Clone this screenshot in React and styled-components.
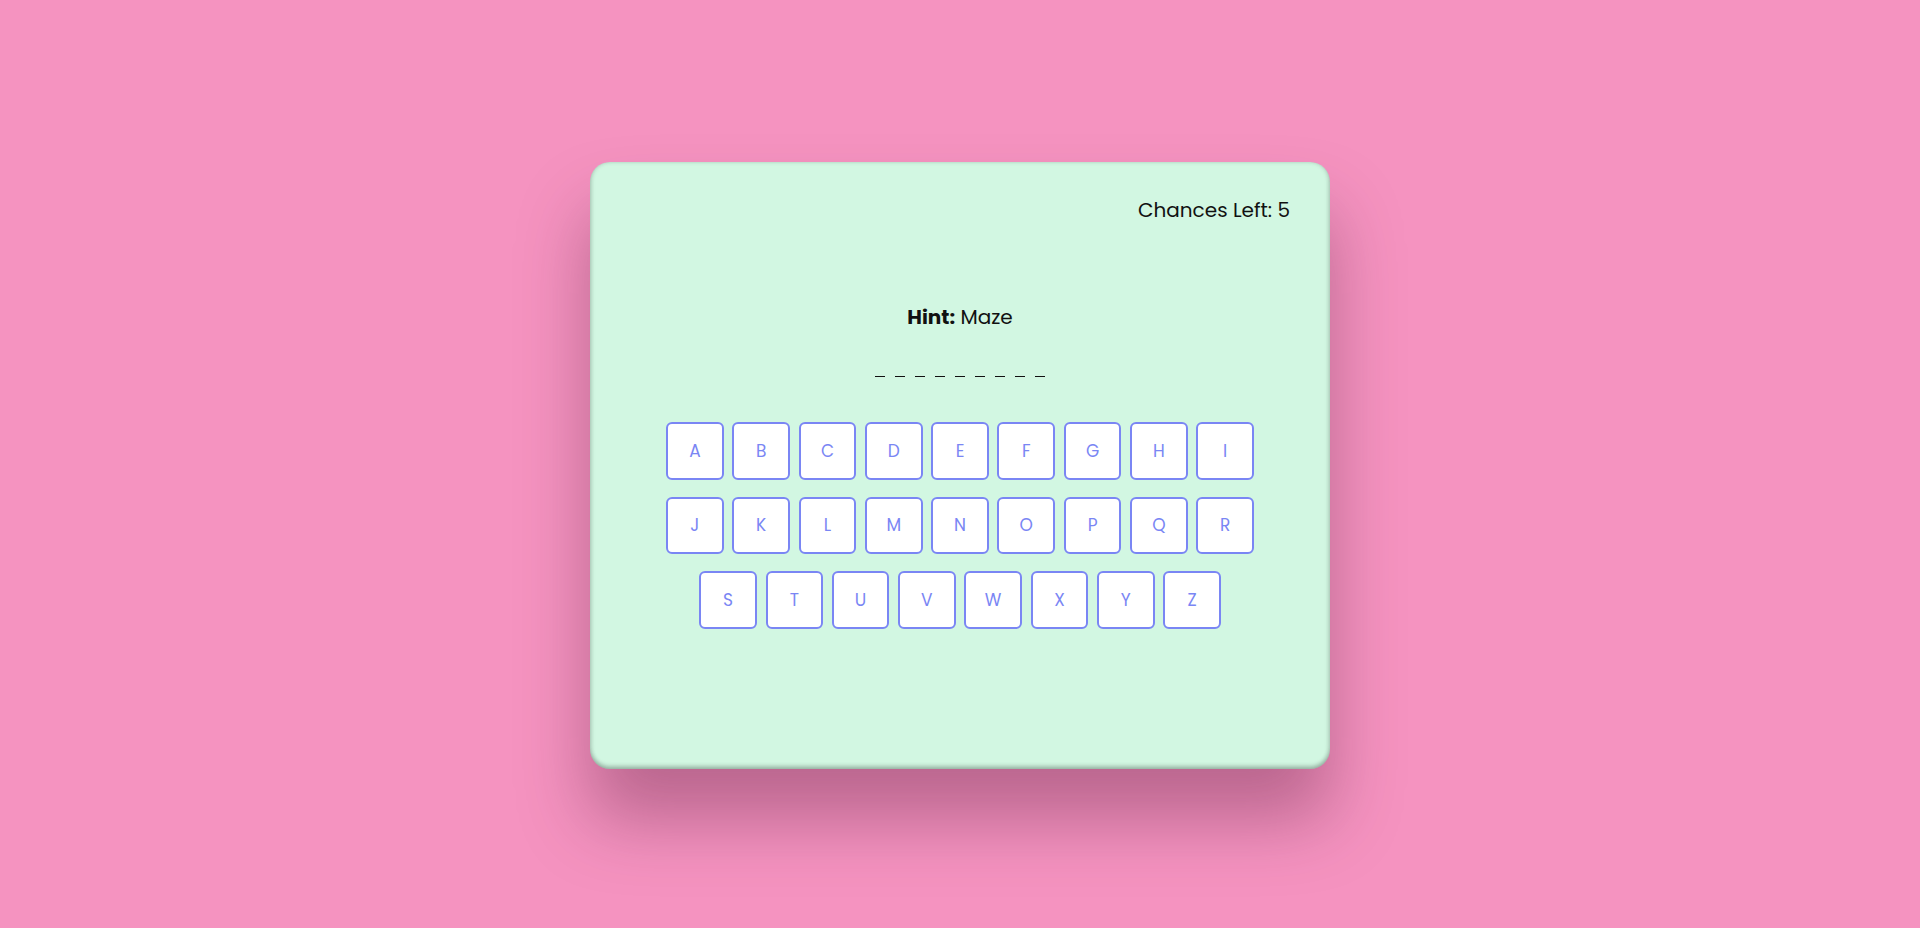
import React from 'react';
import styled, { createGlobalStyle } from 'styled-components';

const GlobalStyle = createGlobalStyle`
  html, body {
    margin: 0;
    padding: 0;
    height: 100%;
  }
  body {
    background: #f593c0;
    font-family: Poppins, Inter, "Noto Sans", sans-serif;
  }
`

const Page = styled.div`
  display: flex;
  justify-content: center;
  align-items: center;
  height: 928px;
`

const Card = styled.div`
  box-sizing: border-box;
  width: 740px;
  height: 607px;
  margin-top: 3px;
  padding: 36px 40px 0;
  background: #d2f7e2;
  border-radius: 20px;
  display: flex;
  flex-direction: column;
  align-items: center;
  box-shadow:
    0 50px 70px rgba(90, 30, 60, 0.38),
    inset 0 -3px 4px rgba(0, 0, 0, 0.22),
    inset 2px 0 4px rgba(0, 0, 0, 0.08),
    inset -2px 0 4px rgba(0, 0, 0, 0.08);
`

const Chances = styled.div`
  align-self: flex-end;
  font-size: 20px;
  line-height: 24px;
  color: #111;
`

const Hint = styled.p`
  margin: 83px 0 0;
  font-size: 20px;
  line-height: 24px;
  color: #111;

  b {
    font-weight: 700;
  }
`

const Word = styled.div`
  display: flex;
  gap: 10px;
  margin-top: 24px;
  height: 24px;
  align-items: flex-end;
  padding-bottom: 4px;
`

const Dash = styled.span`
  display: block;
  width: 10px;
  height: 1.5px;
  background: #111;
`

const Keyboard = styled.div`
  display: flex;
  flex-wrap: wrap;
  justify-content: center;
  gap: 17px 8.7px;
  width: 600px;
  margin-top: 41px;
`

const Key = styled.button`
  box-sizing: border-box;
  width: 57.6px;
  height: 57.6px;
  background: #fff;
  border: 2px solid #7a86f4;
  border-radius: 6px;
  color: #7a86f4;
  font-family: inherit;
  font-size: 17px;
  font-weight: 400;
  padding: 0;
  cursor: pointer;
`

const letters = 'ABCDEFGHIJKLMNOPQRSTUVWXYZ'.split('');

const App = () => {
    return (
        <Page>
            <GlobalStyle />
            <Card>
                <Chances>Chances Left: 5</Chances>
                <Hint><b>Hint:</b> Maze</Hint>
                <Word>
                    {Array.from({ length: 9 }).map((_, i) => <Dash key={i} />)}
                </Word>
                <Keyboard>
                    {letters.map(l => <Key key={l}>{l}</Key>)}
                </Keyboard>
            </Card>
        </Page>
    )
};

export default App;
